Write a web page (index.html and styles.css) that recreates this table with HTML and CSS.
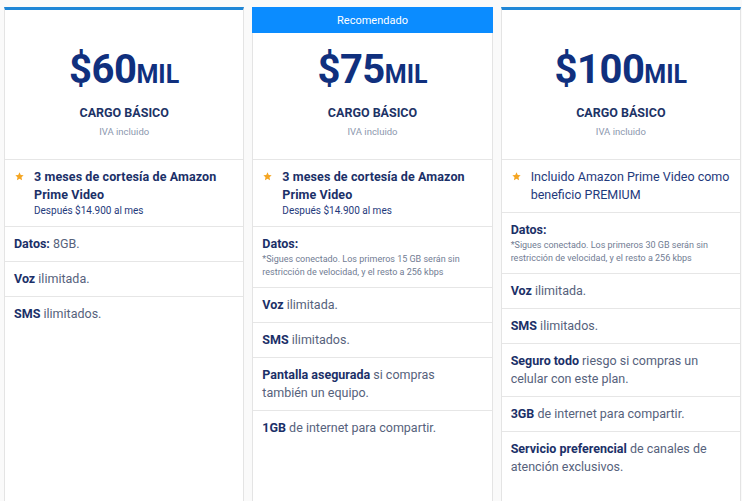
FILE: index.html
```html
<!DOCTYPE html>
<html lang="es">
<head>
<meta charset="utf-8">
<title>Planes</title>
<link rel="stylesheet" href="styles.css">
</head>
<body>
<div class="plans">
	<!-- plan $60 -->
	<div class="plan plan-line">
		<div class="plan-head">
			<div class="price">$60<span class="unit">MIL</span></div>
			<div class="charge">CARGO BÁSICO</div>
			<div class="tax">IVA incluido</div>
		</div>
		<ul class="features">
			<li class="perk">
				<svg class="star" viewBox="0 0 10 10"><path d="M5 .4l1.4 2.9 3.2.4-2.35 2.2.6 3.2L5 7.5 2.15 9.1l.6-3.2L.4 3.7l3.2-.4z"/></svg>
				<div><b>3 meses de cortesía de Amazon Prime Video</b><small>Después $14.900 al mes</small></div>
			</li>
			<li><b>Datos:</b> 8GB.</li>
			<li><b>Voz</b> ilimitada.</li>
			<li><b>SMS</b> ilimitados.</li>
		</ul>
	</div>
	<!-- plan $75 -->
	<div class="plan plan-featured">
		<div class="badge">Recomendado</div>
		<div class="plan-head">
			<div class="price">$75<span class="unit">MIL</span></div>
			<div class="charge">CARGO BÁSICO</div>
			<div class="tax">IVA incluido</div>
		</div>
		<ul class="features">
			<li class="perk">
				<svg class="star" viewBox="0 0 10 10"><path d="M5 .4l1.4 2.9 3.2.4-2.35 2.2.6 3.2L5 7.5 2.15 9.1l.6-3.2L.4 3.7l3.2-.4z"/></svg>
				<div><b>3 meses de cortesía de Amazon Prime Video</b><small>Después $14.900 al mes</small></div>
			</li>
			<li><b>Datos:</b><p class="note">*Sigues conectado. Los primeros 15 GB serán sin restricción de velocidad, y el resto a 256 kbps</p></li>
			<li><b>Voz</b> ilimitada.</li>
			<li><b>SMS</b> ilimitados.</li>
			<li><b>Pantalla asegurada</b> si compras también un equipo.</li>
			<li><b>1GB</b> de internet para compartir.</li>
		</ul>
	</div>
	<!-- plan $100 -->
	<div class="plan plan-line">
		<div class="plan-head">
			<div class="price">$100<span class="unit">MIL</span></div>
			<div class="charge">CARGO BÁSICO</div>
			<div class="tax">IVA incluido</div>
		</div>
		<ul class="features">
			<li class="perk">
				<svg class="star" viewBox="0 0 10 10"><path d="M5 .4l1.4 2.9 3.2.4-2.35 2.2.6 3.2L5 7.5 2.15 9.1l.6-3.2L.4 3.7l3.2-.4z"/></svg>
				<div class="perk-plain">Incluido Amazon Prime Video como beneficio PREMIUM</div>
			</li>
			<li><b>Datos:</b><p class="note">*Sigues conectado. Los primeros 30 GB serán sin restricción de velocidad, y el resto a 256 kbps</p></li>
			<li><b>Voz</b> ilimitada.</li>
			<li><b>SMS</b> ilimitados.</li>
			<li><b>Seguro todo</b> riesgo si compras un celular con este plan.</li>
			<li><b>3GB</b> de internet para compartir.</li>
			<li><b>Servicio preferencial</b> de canales de atención exclusivos.</li>
		</ul>
	</div>
</div>
</body>
</html>
```

FILE: styles.css
```css
body{
	margin:0;
	padding:7px 1px 0 4px;
	background:#fafafa;
	font-family:Roboto,"Liberation Sans",sans-serif;
	color:#56627c;
}
.plans{
	display:flex;
	gap:8px;
}
.plan{
	flex:1;
	min-height:520px;
	background:#fff;
	border:1px solid #e4e4e4;
	border-top:0;
}
.plan-line{
	border-top:3px solid #1f86d6;
}
.badge{
	height:26px;
	margin:0 -1px;
	background:#0b8cff;
	color:#fff;
	font-size:11px;
	line-height:27px;
	text-align:center;
}
.plan-head{
	padding:38px 0 20px;
	border-bottom:1px solid #e6e6e6;
	text-align:center;
}
.plan-featured .plan-head{
	padding-top:15px;
}
.price{
	font-size:40px;
	line-height:44px;
	font-weight:700;
	color:#10307e;
	letter-spacing:-0.5px;
}
.unit{
	font-size:25px;
	letter-spacing:0;
}
.charge{
	margin-top:8px;
	font-size:12.5px;
	line-height:16px;
	font-weight:700;
	color:#1d3366;
}
.tax{
	margin-top:4px;
	font-size:9.5px;
	line-height:14px;
	color:#8c97ae;
}
.features{
	list-style:none;
	margin:0;
	padding:0;
	font-size:12.5px;
	line-height:18px;
}
.features li{
	padding:8px 12px 8px 9px;
	border-bottom:1px solid #e6e6e6;
}
.features li:last-child{
	border-bottom:0;
}
.features b{
	color:#1b3068;
}
.features .perk{
	display:flex;
	padding-right:6px;
}
.perk b{
	letter-spacing:0.1px;
}
.star{
	flex:none;
	width:9px;
	height:9px;
	margin:4px 10px 0 1px;
	fill:#f5a623;
}
.perk small{
	display:block;
	font-size:10px;
	line-height:14px;
	color:#1f3a7c;
}
.perk-plain{
	color:#1f3a7c;
}
.note{
	margin:0;
	font-size:9px;
	line-height:13px;
	color:#717c93;
}
```
